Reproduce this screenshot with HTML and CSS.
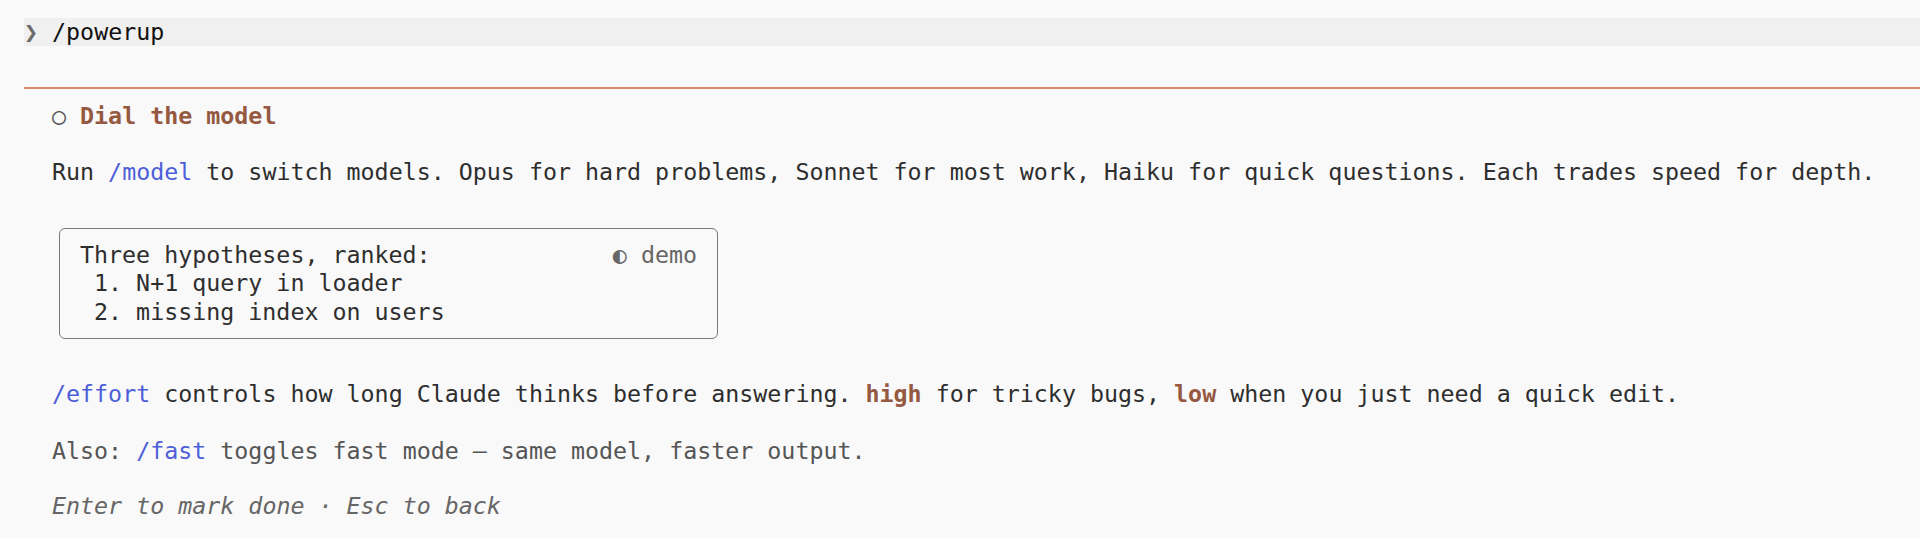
FILE: index.html
```html
<!DOCTYPE html>
<html>
<head>
<meta charset="utf-8">
<link rel="stylesheet" href="styles.css">
</head>
<body>
<div class="prompt"><span class="chev">❯</span> <span class="cmd">/powerup</span></div>
<div class="panel">
  <div class="title"><span class="dot">○</span> <b>Dial the model</b></div>
  <p class="para">Run <span class="link">/model</span> to switch models. Opus for hard problems, Sonnet for most work, Haiku for quick questions. Each trades speed for depth.</p>
  <div class="demo-box">
    <div class="demo-head"><span class="demo-line">Three hypotheses, ranked:</span><span class="demo-tag">◐ demo</span></div>
    <div class="demo-line"> 1. N+1 query in loader</div>
    <div class="demo-line"> 2. missing index on users</div>
  </div>
  <p class="para effort"><span class="link">/effort</span> controls how long Claude thinks before answering. <b class="hl">high</b> for tricky bugs, <b class="hl">low</b> when you just need a quick edit.</p>
  <p class="para also">Also: <span class="link">/fast</span> toggles fast mode — same model, faster output.</p>
  <p class="para hint">Enter to mark done · Esc to back</p>
</div>
</body>
</html>
```
FILE: styles.css
```css
html, body {
  margin: 0;
  padding: 0;
  background: #f9f9f9;
}
body {
  font-family: "DejaVu Sans Mono", "Liberation Mono", monospace;
  font-size: 23.3px;
  line-height: 28px;
  color: #2e2e2e;
  padding-top: 18px;
}
.prompt {
  margin-left: 24px;
  height: 28px;
  line-height: 28px;
  background: #f0f0f0;
  white-space: pre;
}
.chev {
  color: #6a6a6a;
}
.cmd {
  color: #111;
}
.panel {
  margin-top: 41px;
  margin-left: 24px;
  border-top: 2px solid #da8b6e;
  padding-left: 28px;
  padding-top: 13px;
}
.title {
  white-space: pre;
  height: 28px;
}
.title .dot {
  color: #555;
}
.title b {
  color: #955840;
  font-weight: bold;
}
.para {
  margin: 28px 0 0 0;
  white-space: pre;
}
.link {
  color: #4d5fd8;
}
.demo-box {
  margin-top: 42px;
  margin-left: 7px;
  width: 659px;
  box-sizing: border-box;
  border: 1.5px solid #777;
  border-radius: 6px;
  padding: 11.5px 20px 12px 20px;
  line-height: 28.5px;
}
.demo-line {
  white-space: pre;
}
.demo-head {
  display: flex;
  justify-content: space-between;
}
.demo-tag {
  color: #666;
  white-space: pre;
}
.effort {
  margin-top: 41px;
}
.hl {
  color: #955840;
  font-weight: bold;
}
.also {
  margin-top: 29px;
  color: #555;
}
.hint {
  margin-top: 27px;
  color: #666;
  font-style: italic;
}
```
